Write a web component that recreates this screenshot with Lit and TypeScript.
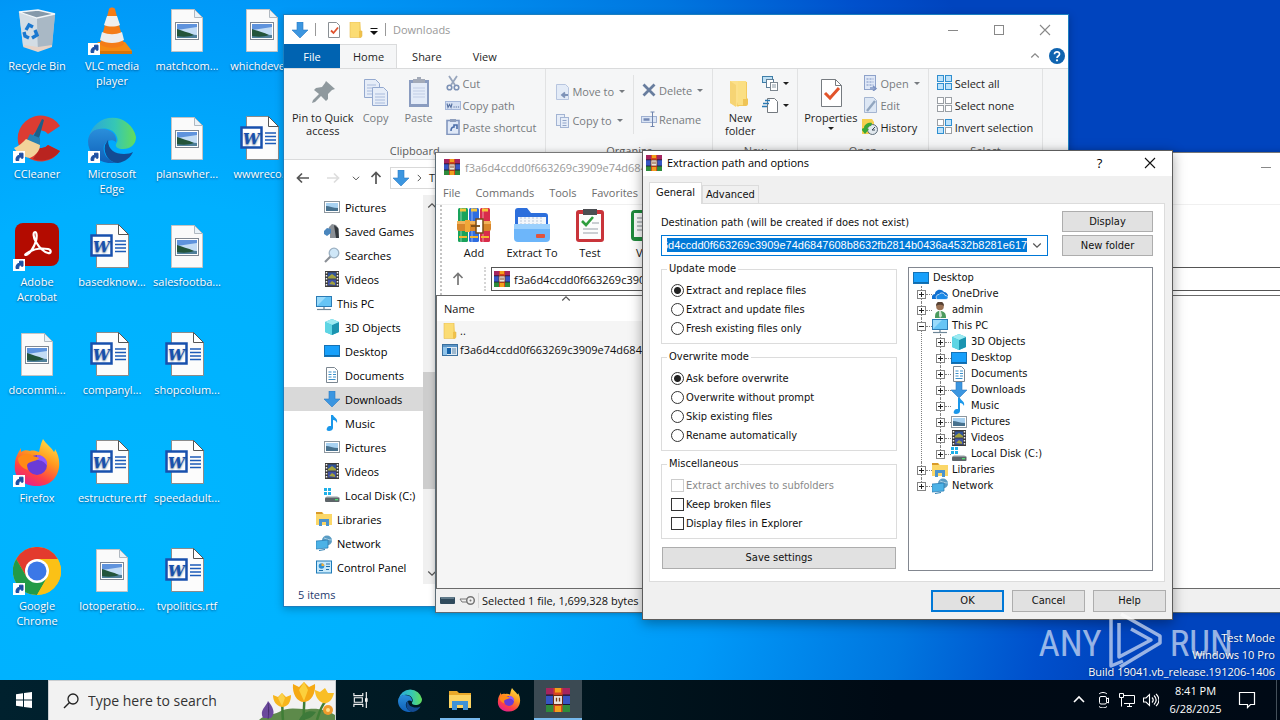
import { LitElement, html, css, svg, nothing, TemplateResult } from "lit";
import { customElement, query } from "lit/decorators.js";
import { classMap } from "lit/directives/class-map.js";

const pic = (w: number, h: number, body: unknown) =>
  html`<svg class="pic" viewBox="0 0 ${w} ${h}" aria-hidden="true">${body}</svg>`;

/* ---------- desktop icons, 48 x 48 ---------- */
const shortcut = svg`<rect x="0" y="36" width="12" height="12" fill="#fff"/><path d="M3 45.500C2.800 42 4 40.500 6.500 40.300V38.200H10v5H8.300v-1.400C6 42.300 5.600 43.500 5.800 45.500z" fill="#1d4fa3" stroke="#1d4fa3"/>`;

const recycle = pic(48, 48, svg`
  <path d="M6 5l4 33 15 6 14-5 3-32-18-4z" fill="#b9c6d1" opacity=".95"/>
  <path d="M6 5l18 6 1 33-15-5z" fill="#d3dde5"/>
  <path d="M24 11l18-4-3 32-14 5z" fill="#a9b8c5"/>
  <path d="M6 5l19-2 17 4-18 4z" fill="#8599aa" stroke="#f2f6f9" stroke-width="1.300"/>
  <path d="M11 38l14 2 14-2v2l-14 5-15-5z" fill="#e6d3c8"/>
  <g fill="none" stroke="#1a78d0" stroke-width="3.400"><path d="M13 23l3-5 4 2"/><path d="M22 23l2 5-5 3"/><path d="M16 31l-4-2-1-4"/></g>`);
const vlc = pic(48, 48, svg`
  <path d="M10 35h27l7 9a2 2 0 0 1-2 2H5a2 2 0 0 1-2-2z" fill="#f58a12"/>
  <path d="M4 44h40v3H4z" fill="#d87406"/>
  <path d="M21 2c1-2 5-2 6 0l9 35c-5 5-19 5-24 0z" fill="#f47c17"/>
  <path d="M19 9h10l3 9c-5 2-11 2-16 0z" fill="#efefef"/>
  <path d="M14 25c7 3 13 3 20 0l2 8c-7 4-17 4-24 0z" fill="#ececec"/>${shortcut}`);
const ccleaner = pic(48, 48, svg`
  <path d="M47 11A23 23 0 1 0 47 36L35 30A9 9 0 1 1 35 19z" fill="#dc3c32"/>
  <path d="M47 36A23 23 0 0 1 20 44L27 33A9 9 0 0 0 35 30z" fill="#b92420"/>
  <path d="M29 4l2 1-6 22-6-3z" fill="#1c5f88"/><path d="M17 19l10 4 0 7-14-3z" fill="#2681b4"/>
  <path d="M1 33c5-2 9-6 12-9l14 6c0 6-5 11-10 13-7-1-13-5-16-10z" fill="#f2d39a"/>${shortcut}`);
const edgeBody = svg`
  <defs>
    <linearGradient id="eg1" x1="0" y1="0" x2="1" y2="0"><stop offset="0" stop-color="#2aa5dc"/><stop offset=".55" stop-color="#35c7b5"/><stop offset="1" stop-color="#63dd5a"/></linearGradient>
    <linearGradient id="eg2" x1="0" y1="0" x2="0" y2="1"><stop offset="0" stop-color="#2a8fdb"/><stop offset="1" stop-color="#0f5fb8"/></linearGradient>
  </defs>
  <path d="M1 22A24 24 0 0 1 48 22c0 8-6 12-13 12-5 0-8-2-7-5 2-3 2-5 0-9-5-9-20-9-27 2z" fill="url(#eg1)"/>
  <path d="M0 26C1 14 12 12 20 15c6 2 9 7 8 12-6-5-14 1-12 9 1 6 6 10 12 12C12 50 0 40 0 26z" fill="url(#eg2)"/>
  <path d="M17 30c-2 10 5 18 13 18 7-1 13-6 15-11-2 1-5 2-9 2-9 0-16-4-16-14z" fill="#134b93"/>`;
const edge = pic(48, 48, svg`${edgeBody}${shortcut}`);
const edgePlain = pic(48, 48, edgeBody);
const acrobat = pic(48, 48, svg`
  <rect x="2" y="0" width="44" height="43" rx="8" fill="#b30b00"/>
  <path d="M13 32c4-1 8-8 10-14 1-4 1-9-1-9s-2 5 1 10 8 10 12 11c3 1 4-3 0-4-6-1-14 0-19 3-3 2-5 3-3 3z" fill="none" stroke="#fff" stroke-width="2.200"/>${shortcut}`);
const firefoxBody = svg`
  <defs><linearGradient id="ff" x1=".8" y1="0" x2=".3" y2="1"><stop offset="0" stop-color="#ffe14a"/><stop offset=".4" stop-color="#ff9a1f"/><stop offset=".75" stop-color="#ff3f46"/><stop offset="1" stop-color="#e3208f"/></linearGradient></defs>
  <path d="M30 0c3 5 8 8 11 13 1-1 1-2 1-3 9 14 4 37-18 37C10 47 0 38 2 25c0-6 3-11 6-16v4c3-2 6-2 9-1 3-1 6 0 9 1 1-5 2-9 4-13z" fill="url(#ff)"/>
  <circle cx="24" cy="26" r="10" fill="#6a3bd6"/><path d="M24 16c6 0 11 4 10 11-2-4-6-6-10-6z" fill="#9059ff"/>
  <path d="M5 19c5-5 12-5 15-2 2 1 5 1 6 2-1 2-5 3-8 4-4 1-5 3-3 8-6-2-10-6-10-12z" fill="#ff8a16"/>`;
const firefox = pic(48, 48, svg`${firefoxBody}${shortcut}`);
const firefoxPlain = pic(48, 48, firefoxBody);
const chrome = pic(48, 48, svg`
  <circle cx="24" cy="24" r="24" fill="#fbc116"/>
  <path d="M24 12h20.800A24 24 0 0 0 3.200 12l10.400 18z" fill="#e33b2e"/>
  <path d="M3.200 12A24 24 0 0 0 24 48l10.400-18-20.800 0z" fill="#229a48"/>
  <path d="M44.800 12A24 24 0 0 1 24 48l10.400-18A12 12 0 0 0 24 12z" fill="#fbc116"/>
  <circle cx="24" cy="24" r="12" fill="#fff"/><circle cx="24" cy="24" r="9.500" fill="#3b78e7"/>${shortcut}`);
const sheet = svg`<path d="M8.500 2.500h23l8 8v34h-31z" fill="#fafafa" stroke="#c4c4c4"/><path d="M31.500 2.500v8h8z" fill="#eaf2f8" stroke="#b0b8c0"/>`;
const picture = pic(48, 48, svg`${sheet}
  <rect x="12.500" y="15.500" width="23" height="17" fill="#fff" stroke="#7f8792"/>
  <rect x="14" y="17" width="20" height="14" fill="#c3dcf5"/><path d="M14 17h20v3l-20 3z" fill="#5f93dd"/>
  <path d="M14 24c6 1 12 4 20 4v3H14z" fill="#4f7f9a"/><path d="M14 22c5 2 11 3 17 6-5 2-12 2-17 1z" fill="#23543a"/>`);
const word = pic(48, 48, svg`
  <path d="M8.500 1.500h22l10 10v33h-32z" fill="#fcfcfc" stroke="#8b8b8b"/><path d="M30.500 1.500v10h10z" fill="#fff" stroke="#555"/>
  <path d="M27 18h11M27 21.500h11M27 25h11M27 28.500h11" stroke="#1d5bb8" stroke-width="1.300"/>
  <rect x="3.500" y="12.500" width="20" height="20" fill="#fff" stroke="#1850ad" stroke-width="2.500"/>
  <text x="13.500" y="28.500" text-anchor="middle" font-family="DejaVu Serif, serif" font-weight="700" font-style="italic" font-size="15" fill="#1850ad">W</text>`);

/* ---------- small icons, 16 x 16 ---------- */
const rarBody = svg`
  <rect x="0" y="0" width="16" height="5" fill="#a5255f"/><rect x="0" y="5" width="16" height="6" fill="#3655c4"/><rect x="0" y="11" width="16" height="5" fill="#2e8b3c"/>
  <path d="M0 4.800h16M0 11h16" stroke="#1b1630" stroke-width=".8"/><rect x="5" y="0" width="6" height="16" fill="#d8451f"/>
  <path d="M6 0h4v3H6zM6 12h4v4H6z" fill="#f2a01c"/><rect x="5" y="5" width="6" height="6" fill="#ece5dc" stroke="#6c2a12" stroke-width=".7"/>
  <path d="M7 9V6.500M9 9V6.500" stroke="#7b3b16" stroke-width=".9"/>`;
const rar = pic(16, 16, rarBody);
const down = pic(16, 16, svg`<path d="M5 0h6v8h5l-8 8-8-8h5z" fill="#3c96e0"/><path d="M5 0h6v8h5l-8 8-8-8h5z" fill="none" stroke="#2878c4" stroke-width=".6"/>`);
const folder = pic(16, 16, svg`<path d="M2 0h10l1 9h1v5l-1 1.500H2z" fill="#fbdc74"/><path d="M11 9h3v5l-1 1.500h-2z" fill="#f0c14a"/><path d="M2 0h10v9h2v5l-1 1.500H2z" fill="none" stroke="#e6bc50" stroke-width=".6"/>`);
const docCheck = pic(16, 16, svg`<path d="M2.500.5h8l3 3v12h-11z" fill="#fff" stroke="#8a8f94"/><path d="M5 8.500l2.500 2.500L12 5.500" fill="none" stroke="#e0522d" stroke-width="1.800"/>`);
const caretBar = pic(8, 16, svg`<path d="M.5 6.500h7" stroke="#111"/><path d="M0 9h8l-4 4z" fill="#111"/>`);
const photos = pic(16, 16, svg`<rect x=".5" y="2.500" width="15" height="11" fill="#fff" stroke="#8d979f"/><rect x="2" y="4" width="12" height="8" fill="#a8d2f2"/><path d="M2 7c3 0 7 2 12 2v3H2z" fill="#47718e"/>`);
const games = pic(16, 16, svg`<path d="M6 15V9l-2-1 1-4 3-3 4 1 3 4v9z" fill="#8b9096"/><path d="M10 2l4 3 1 10h-3z" fill="#33383d"/><path d="M0 8l3-3 4 1v4l-4 3-3-2z" fill="#4a86bd"/>`);
const search16 = pic(16, 16, svg`<path d="M1 15l6-6" stroke="#8a8f96" stroke-width="2.200"/><circle cx="10" cy="6" r="4.800" fill="#cfe7f8" stroke="#9bb0c2" stroke-width="1.300"/>`);
const film = pic(16, 16, svg`<rect x="1" y="0" width="14" height="16" fill="#3b3b3b"/><path d="M2.500 1v15M13.500 1v15" stroke="#f3f3f3" stroke-width="1.500" stroke-dasharray="1.500 1.500"/><rect x="4" y="1.500" width="8" height="6" fill="#30539a"/><rect x="4" y="8.500" width="8" height="6" fill="#3f51a6"/><path d="M4 6l4-3 4 3v1.500H4zM5 13l3-3 3 2v2z" fill="#a3a23c"/>`);
const pc = pic(16, 16, svg`<rect x=".5" y="1.500" width="15" height="10" fill="#66c4f5" stroke="#2b7bb5"/><path d="M1 11V2h9z" fill="#9adbfb"/><path d="M7 12h2v2H7z" fill="#9fb0bb"/><path d="M1 14.500h14" stroke="#6d8697" stroke-width="1.200"/>`);
const cube = pic(16, 16, svg`<path d="M1 3l7-3 7 3v10l-7 3-7-3z" fill="#35c0d6"/><path d="M8 6l7-3v10l-7 3z" fill="#1b94b0"/><path d="M1 3l7-3 7 3-7 3z" fill="#9ceaf2"/><path d="M1 3l7 3v10l-7-3z" fill="#5ed5e4"/>`);
const desktop16 = pic(16, 16, svg`<rect x=".5" y="2.500" width="15" height="11" fill="#18a0fb" stroke="#1672b5"/><path d="M1 12.500h14" stroke="#0d6cae"/>`);
const doc16 = pic(16, 16, svg`<path d="M2.500.5h8l3 3v12h-11z" fill="#fff" stroke="#7c8791"/><path d="M4.500 5h3M4.500 7.500h3M4.500 10h3M4.500 12.500h7M9 5h3M9 7.500h3M9 10h3" stroke="#3a8fc9" stroke-width="1.200"/>`);
const music = pic(16, 16, svg`<path d="M7 0h2c1 3 5 3 4 8-1-2-2-3-4-3v8c0 2-2 3-4 3s-3-1-2-3 2-2 4-2z" fill="#1a97ea"/>`);
const disk = pic(16, 16, svg`<path d="M0 1h3v3H0zM4 1h3v3H4zM0 5h3v3H0zM4 5h3v3H4z" fill="#1fb0e8"/><path d="M3 9h10l3 2H1z" fill="#c9cdd1"/><rect x="1" y="10.500" width="14.500" height="4.500" rx="1" fill="#5d6469"/><rect x="11" y="12" width="3" height="1.300" fill="#4fe070"/>`);
const library = pic(16, 16, svg`<path d="M0 1h6l2 2h8v11H0z" fill="#fbd768"/><path d="M0 1h6l1 2H0z" fill="#d99a28"/><path d="M3 8h10v7h-3v-4H6v4H3z" fill="#4b93cd"/>`);
const network = pic(16, 16, svg`<circle cx="11" cy="5.500" r="5" fill="#5a9cc4"/><path d="M8 3c3 1 5 2 8 2" stroke="#a9d0e4" fill="none"/><path d="M0 6l12-1v8l-12 1z" fill="#4cb2e6" stroke="#2579b0" stroke-width=".7"/><path d="M3 15.500l6-1" stroke="#2d7db0"/>`);
const control = pic(16, 16, svg`<rect x=".5" y="2" width="15" height="12" fill="#c7e9fb" stroke="#1d7ab8"/><circle cx="5.500" cy="7" r="2.800" fill="#2d8fd2"/><path d="M5.500 7V4.200A2.800 2.800 0 0 1 8.300 7z" fill="#f3b13c"/><path d="M10 5h4M10 7.500h4M3 11.500h4M10 10.500h3" stroke="#226fa8"/>`);
const cloud = pic(16, 16, svg`<path d="M0 13c-1-3 1-5 3-5 0-4 6-6 9-2 2 0 4 2 4 4s-1 3-3 3z" fill="#0f6fd0"/><path d="M5 13.500c-2-3 0-5 2-5 2-3 6-1 6 1 4 0 4 4 0 4z" fill="#1b8ae8" stroke="#fff" stroke-width=".7"/>`);
const person = pic(16, 16, svg`<path d="M3 16c0-5 1-7 5-7s6 2 6 7z" fill="#4b9b5e"/><path d="M7 9h2l1 5-2 2-1-2z" fill="#cfe2d2"/><circle cx="8" cy="4.500" r="3.800" fill="#9a7255"/><path d="M4 4c0-6 8-6 8 0-2-1-5-2-8 0z" fill="#574234"/>`);
const exe = pic(16, 16, svg`<rect x=".5" y="2.500" width="15" height="11" fill="#dfeaf3" stroke="#3a6f9e"/><rect x="1" y="3" width="14" height="2" fill="#5b95c6"/><rect x="1" y="5" width="4" height="8" fill="#8fc3ea"/><rect x="5" y="6" width="4" height="6" fill="#1461a8"/><path d="M10 7h4M10 9h4M10 11h4" stroke="#5a86aa"/>`);
const chevron = (dir: "up" | "down" | "right", c = "#555") =>
  pic(16, 16, svg`<path d=${{ up: "M3 10l5-5 5 5", down: "M3 6l5 5 5-5", right: "M6 3l5 5-5 5" }[dir]} fill="none" stroke=${c} stroke-width="1.600"/>`);
const arrow = (dir: "left" | "right" | "up", c: string) =>
  pic(16, 16, svg`<path d=${{ left: "M14 8H3M7 3.500L2.500 8 7 12.500", right: "M2 8h11M9 3.500l4.500 4.500L9 12.500", up: "M8 14V3M3.500 7L8 2.500 12.500 7" }[dir]} fill="none" stroke=${c} stroke-width="1.700"/>`);
const minimize = pic(16, 16, svg`<path d="M3 8.500h10" stroke="#888"/>`);
const maximize = pic(16, 16, svg`<rect x="3.500" y="3.500" width="9" height="9" fill="none" stroke="#888"/>`);
const close = (c: string) => pic(16, 16, svg`<path d="M3 3l10 10M13 3L3 13" stroke=${c} stroke-width="1.100"/>`);

/* ---------- ribbon icons ---------- */
const pin = pic(32, 32, svg`<path d="M19 5l9 8-3 1-4 4v5l-2 2-5-5-6 6-3 1 1-3 6-6-5-4 2-2 6-1 3-4z" fill="#8f999e"/>`);
const copy = pic(32, 32, svg`<g fill="#e6edf8" stroke="#94a9cf"><path d="M4.500 3.500h11l4 4v14h-15z"/><path d="M12.500 11.500h11l4 4v14h-15z"/></g><path d="M7 9h9M7 12h5M7 15h5M7 18h5M15 18h10M15 21h10M15 24h10M15 27h10" stroke="#a9bbdc"/>`);
const paste = pic(32, 32, svg`<rect x="6" y="4" width="20" height="27" fill="#8a9cc0"/><rect x="8" y="7" width="16" height="21" fill="#e3ebf8"/><path d="M14 1h4v2h4v4H10V3h4z" fill="#a3aab8"/><path d="M10 12h12M10 15h12M10 18h12M10 21h12" stroke="#c1cde5"/>`);
const cut = pic(16, 16, svg`<path d="M4 1l6 9M12 1L6 10" stroke="#98a6bd" stroke-width="1.800"/><circle cx="4.500" cy="12.500" r="2.300" fill="none" stroke="#7c91b5" stroke-width="1.600"/><circle cx="11.500" cy="12.500" r="2.300" fill="none" stroke="#7c91b5" stroke-width="1.600"/>`);
const copyPath = pic(16, 16, svg`<rect x=".5" y="4.500" width="15" height="8" fill="#d5e0f3" stroke="#a5b7da"/><path d="M2 6.500l1 4 1.500-3 1.500 3 1-4M8.500 10h1.200M10.700 10h1.200M12.900 10h1.200" fill="none" stroke="#56709f" stroke-width="1.100"/>`);
const pasteLink = pic(16, 16, svg`<rect x="2" y="1.500" width="12" height="14" fill="#dfe8f7" stroke="#8296be" stroke-width="1.600"/><path d="M5 0h6v3H5z" fill="#8f9fbd"/><path d="M6 12c0-3 1-4 3-4V6h3v4" fill="none" stroke="#496ca8" stroke-width="1.600"/>`);
const moveTo = pic(16, 16, svg`<path d="M2.500.5h9l3 3v12h-12z" fill="#e3ebf7" stroke="#b7c5df"/><path d="M14 11H9M11 8.500L8 11l3 2.500" fill="none" stroke="#7e93b8" stroke-width="1.800"/>`);
const copyTo = pic(16, 16, svg`<g fill="#e6edf8" stroke="#a3b4d3"><rect x="2.500" y="1.500" width="8" height="11"/><rect x="6.500" y="4.500" width="8" height="10"/></g><path d="M8.500 7.500h4M8.500 10h4M8.500 12.500h4" stroke="#92a5c8"/>`);
const cross = pic(16, 16, svg`<path d="M2.500 2.500l11 11M13.500 2.500l-11 11" stroke="#687d9e" stroke-width="2.800"/>`);
const rename = pic(16, 16, svg`<rect x=".5" y="5.500" width="15" height="6" fill="#dbe5f5" stroke="#9fb0d0"/><path d="M2.500 8.500h6" stroke="#7489b4" stroke-width="2.500"/><path d="M11.500 1v15M9.500 1h4M9.500 15.500h4" stroke="#6f84ae"/>`);
const newFolder = pic(32, 32, svg`<path d="M6 5h13v22l-5 4-8-4z" fill="#fce08a"/><path d="M19 5l4 1v16l1 1v6l-2 1-9 0z" fill="#f3ca5e"/><path d="M6 5l6 4v22l-6-4z" fill="#f6d474"/><path d="M14 5h8v18h2v6H14z" fill="#fbdf83"/><path d="M19 23h5v5l-2 2h-3z" fill="#efc456"/>`);
const newItem = pic(16, 16, svg`<rect x=".5" y="1.500" width="10" height="6" fill="#bfe0f4" stroke="#3f7ea8"/><rect x="4.500" y="4.500" width="7" height="8" fill="#fff" stroke="#5f7f98"/><rect x="8.500" y="7.500" width="7" height="8" fill="#fff" stroke="#7d8790"/><path d="M10 10h4M10 12h4" stroke="#8897a3"/>`);
const easyAccess = pic(16, 16, svg`<path d="M5.500 1.500h7l3 3v11h-10z" fill="#fff" stroke="#73797f"/><path d="M3 3.500h5M1 6.500h6M0 9.500h5" stroke="#2b7ab3" stroke-width="1.400"/>`);
const properties = pic(32, 32, svg`<path d="M6.500 3.500h14l6 6v21h-20z" fill="#fff" stroke="#767b80"/><path d="M20.500 3.500v6h6" fill="none" stroke="#767b80"/><path d="M10 17l5 5 9-10" fill="none" stroke="#e2542b" stroke-width="3"/>`);
const openFile = pic(16, 16, svg`<rect x="2.500" y=".5" width="11" height="14" fill="#dfe8f7" stroke="#8ea2ca"/><path d="M4.500 4h7M4.500 7h7M4.500 10h7" stroke="#7d93c2" stroke-dasharray="2 1"/><path d="M8 13h5M11 11l3 2.500-3 2.500" stroke="#7d93c2" fill="none" stroke-width="1.500"/>`);
const edit = pic(16, 16, svg`<path d="M2.500.5h9l3 3v12h-12z" fill="#dde7f4" stroke="#a4b5d1"/><path d="M5 14l8-10" stroke="#92a6bf" stroke-width="2.400"/>`);
const history = pic(16, 16, svg`<path d="M0 0h10l2 3v12H0z" fill="#f5cf4f"/><circle cx="10.500" cy="10.500" r="5" fill="#e1e8ee" stroke="#5c6b78"/><path d="M2 9c0-4 5-6 8-5L9 7c-2 0-4 2-4 3h2l-4 5-4-5z" fill="#38a838"/><path d="M10 11l3-3M10 11h3" stroke="#3c4a55"/>`);
const squares = (a: string, b: string, c: string, d: string) => {
  const one = (x: number, y: number, f: string) =>
    svg`<rect x=${x} y=${y} width="6" height="6" fill=${f} stroke=${f === "#fff" ? "#9a9fa4" : "#2f8fd0"}/>`;
  return pic(16, 16, svg`${one(0.5, 0.5, a)}${one(8.5, 0.5, b)}${one(0.5, 8.5, c)}${one(8.5, 8.5, d)}`);
};
const help = pic(16, 16, svg`<circle cx="8" cy="8" r="8" fill="#0f64b0"/><path d="M5.500 6.300c0-3.500 5.200-3.200 5 0C10.400 8 8 8 8 10" fill="none" stroke="#fff" stroke-width="1.700"/><circle cx="8" cy="12.300" r="1.100" fill="#fff"/>`);

/* ---------- archiver toolbar, 36 x 36 ---------- */
const books = pic(36, 36, svg`
  <rect x="2" y="1" width="10" height="34" rx="1.500" fill="#19a35b"/><rect x="13" y="1" width="10" height="34" rx="1.500" fill="#2f6de0"/><rect x="24" y="1" width="10" height="34" rx="1.500" fill="#d92c4a"/>
  <path d="M5 1v34M16 1v34M27 1v34" stroke="#fff" stroke-opacity=".25" stroke-width="2"/>
  <path d="M4 3h6M15 3h6M26 3h6" stroke="#f6c63a" stroke-width="3"/><path d="M3 30h8M14 30h8M25 30h8" stroke="#f3b52e" stroke-width="2"/>
  <rect x="1" y="14" width="34" height="10" rx="2" fill="#d8862b"/><rect x="1" y="14" width="34" height="3" fill="#f2b25a"/>
  <path d="M20 12h7v14h-7z" fill="#fff" stroke="#7a4b16" stroke-width="1.500"/><path d="M9 13h5v12H9z" fill="#f0a838"/><path d="M15 19h9" stroke="#7a4b16" stroke-width="1.800"/>`);
const extract = pic(36, 36, svg`
  <path d="M1 4a3 3 0 0 1 3-3h9l4 5h14a3 3 0 0 1 3 3v22H1z" fill="#2d6fdc"/><rect x="4" y="10" width="28" height="14" fill="#f4f7fb"/>
  <path d="M7 10v8M11 10v8M15 10v8M19 10v8M23 10v8M27 10v8" stroke="#b9c7da" stroke-dasharray="2 1"/>
  <path d="M0 17h36v14a4 4 0 0 1-4 4H4a4 4 0 0 1-4-4z" fill="#6db6fa"/><path d="M0 17h36v5H0z" fill="#9bd0fd"/><rect x="22" y="27" width="9" height="4" rx="1" fill="#e2543c"/>`);
const test = pic(36, 36, svg`
  <rect x="4" y="3" width="28" height="32" rx="3" fill="#c9343a"/><rect x="7" y="7" width="22" height="25" fill="#fcfcfc"/>
  <path d="M11 2h14v6H11z" fill="#4b4e52"/><path d="M10 14l4 4 7-8" fill="none" stroke="#2f9e3e" stroke-width="2.600"/>
  <path d="M20 16h7M11 22h15M11 26h15" stroke="#b9bec4" stroke-width="1.500"/>`);
const view = pic(36, 36, svg`<rect x="1" y="3" width="34" height="31" rx="4" fill="#1f8a3c"/><path d="M4 6h13l2 2 2-2h12v24H4z" fill="#fbfbfb"/><path d="M7 11h9M7 15h9M7 19h9M7 23h9" stroke="#a9b0b5" stroke-width="1.500"/>`);

/* ---------- taskbar ---------- */
const windows = pic(16, 16, svg`<path d="M0 2.300L7 1.300V7.600H0zM8 1.100L16 0v7.600H8zM0 8.500h7v6.300l-7-1zM8 8.500h8V16l-8-1.100z" fill="#fff"/>`);
const lens = pic(16, 16, svg`<circle cx="10" cy="6" r="5" fill="none" stroke="#222" stroke-width="1.300"/><path d="M6.500 9.500L1 15" stroke="#222" stroke-width="1.400"/>`);
const flowers = pic(76, 39, svg`
  <path d="M0 39c6-6 14-5 20-8 10-6 20-2 30-3 10-1 20 2 26 6v5z" fill="#5d8a4a"/>
  <path d="M4 37c-4-8 3-11 5-17 5 6 8 12 3 17z" fill="#6b4a9c"/><path d="M9 22c1 6 1 10 0 16" stroke="#523680"/>
  <path d="M24 39c-1-8 0-10-1-16M45 39c-1-10 1-16 0-24M58 39c2-6 3-12 8-18" stroke="#3f7d36" stroke-width="2.500" fill="none"/>
  <path d="M14 14l5 2 4-4 4 4 5-2c0 7-3 12-9 12-6-1-9-6-9-12z" fill="#f7b51c"/><path d="M23 12l3 5-3 8-4-8z" fill="#fbd24a"/>
  <path d="M34 3l6 3 5-5 5 5 6-3c1 9-4 18-11 18-7 0-12-8-11-18z" fill="#f5a914"/><path d="M45 1l4 8-4 11-5-11z" fill="#fcd03c"/>
  <path d="M56 9l5 2 5-4 3 5 6 0c-2 8-6 11-11 10-5-2-8-7-8-13z" fill="#f9be25"/>
  <circle cx="69" cy="29" r="5" fill="#ef9a2c"/><circle cx="69" cy="29" r="2" fill="#ffe08a"/><path d="M40 39c4-9 11-10 17-8-4 6-9 8-17 8z" fill="#3d7a3a"/>`);
const taskView = pic(18, 18, svg`<path d="M1 1v3h10V1M1 17v-3h10v3M1.500 6.500h9v5h-9zM15 0v18" fill="none" stroke="#f2f2f2" stroke-width="1.300"/><path d="M13.500 7h3v4h-3z" fill="#f2f2f2"/>`);
const files = pic(24, 24, svg`<path d="M1 3h8l2 2h12v15H1z" fill="#e9a92a"/><path d="M1 7h22v13H1z" fill="#fcd462"/><path d="M4 13h16v9h-5v-5H9v5H4z" fill="#3f93d6"/>`);
const camera = pic(16, 16, svg`<rect x="4.500" y="4.500" width="7" height="7.500" rx="1.500" fill="none" stroke="#fff"/><path d="M11.500 7l2-1v5l-2-1M4 2c2-2 6-2 8 0M4 14.500c2 2 6 2 8 0" fill="none" stroke="#fff"/>`);
const netTray = pic(16, 16, svg`<path d="M4 3.500h11.500v8H5M8 14.500h5M10.500 11.500v3M.5 1.500h4v4h-4zM2.500 5.500v9" fill="none" stroke="#fff"/>`);
const speaker = pic(16, 16, svg`<path d="M.5 6h2.500l3.500-3.500v11L3 10H.5zM9 5.500c1.500 1.500 1.500 3.500 0 5M11 3.500c2.800 2.800 2.800 6.200 0 9M13 1.800c4 4 4 8.400 0 12.400" fill="none" stroke="#fff" stroke-width="1.100"/>`);
const note = pic(18, 18, svg`<path d="M1.500 1.500h15v12h-4l-3 3v-3h-8z" fill="none" stroke="#fff" stroke-width="1.200"/>`);
const playMark = pic(56, 64, svg`
  <g fill="none" stroke="#fff" stroke-opacity=".6" stroke-width="3.500" stroke-linejoin="round"><path d="M3 8v47l12-5"/><path d="M11 12v34l32-17-20-11"/><path d="M13 3l39 22v7L12 56"/></g>`);

const base = css`
  :host { display: block; box-sizing: border-box; }
  *, *::before, *::after { box-sizing: border-box; }
  .pic { display: block; width: 16px; height: 16px; flex: none; }
  .big .pic { width: 32px; height: 32px; }
  button { font: inherit; color: inherit; background: none; border: 0; padding: 0; margin: 0; white-space: nowrap; }
  a { color: inherit; text-decoration: none; }
  ul { list-style: none; margin: 0; padding: 0; }
`;

@customElement("desk-icons")
class DeskIcons extends LitElement {
  static styles = [base, css`
    ul { display: grid; grid-auto-flow: column; grid-template-rows: repeat(6, 108px); grid-auto-columns: 75px; width: max-content; padding-top: 7px; }
    a { display: flex; flex-direction: column; align-items: center; gap: 3px; width: 74px; color: #fff; text-align: center; font-size: 11px; line-height: 15px; text-shadow: 0 1px 2px rgba(0, 40, 90, .7); }
    .pic { width: 48px; height: 48px; }
    span { white-space: pre-line; }
  `];
  items: [TemplateResult, string][] = [
    [recycle, "Recycle Bin"], [ccleaner, "CCleaner"], [acrobat, "Adobe\nAcrobat"], [picture, "docommi..."], [firefox, "Firefox"], [chrome, "Google\nChrome"],
    [vlc, "VLC media\nplayer"], [edge, "Microsoft\nEdge"], [word, "basedknow..."], [word, "companyl..."], [word, "estructure.rtf"], [picture, "lotoperatio..."],
    [picture, "matchcom..."], [picture, "planswher..."], [picture, "salesfootba..."], [word, "shopcolum..."], [word, "speedadult..."], [word, "tvpolitics.rtf"],
    [picture, "whichdeve..."], [word, "wwwreco..."],
  ];
  render() {
    return html`<ul>${this.items.map(([i, t]) => html`<li><a href="#">${i}<span>${t}</span></a></li>`)}</ul>`;
  }
}

@customElement("explorer-window")
class ExplorerWindow extends LitElement {
  static styles = [base, css`
    :host { display: flex; flex-direction: column; background: #fff; border: 1px solid #1c7fc0; font-size: 11px; color: #1e1e1e; }
    .title { display: flex; align-items: center; height: 29px; padding: 0 0 0 8px; color: #999; }
    .title > .rule { width: 1px; height: 13px; background: #999; margin: 0 7px; }
    .title .quick { display: flex; align-items: center; gap: 6px; padding-left: 3px; }
    .quick .pic:last-child { width: 8px; }
    .tri { width: 0; height: 0; border: 3px solid transparent; border-top-color: currentColor; border-bottom: 0; }
    .controls { display: flex; margin-left: auto; }
    .controls button { width: 46px; display: grid; place-items: center; }
    .tabs { display: flex; align-items: stretch; height: 24px; }
    .tabs button { padding: 0 15px; min-width: 56px; }
    .tabs .file { background: #0063b1; color: #fff; }
    .tabs .on { background: #f5f6f7; border: 1px solid #dadbdc; border-bottom: 0; border-left: 0; padding: 0 12px 0 13px; }
    .tabs .end { display: flex; align-items: center; gap: 8px; margin-left: auto; padding-right: 3px; }
    .end .pic { width: 12px; height: 12px; }
    .end .pic + .pic { width: 16px; height: 16px; }
    .ribbon { display: flex; height: 92px; background: #f5f6f7; border: solid #dadbdc; border-width: 1px 0; }
    .group { display: grid; grid-template-rows: 73px 16px; border-right: 1px solid #e1e2e3; justify-items: center; }
    .group .name { color: #5a5a5a; line-height: 18px; }
    .group > div { display: flex; gap: 1px; justify-self: stretch; padding: 3px 9px 0 8px; }
    .group.slim > div { padding: 3px 8px 0 6px; }
    .big { display: flex; flex-direction: column; align-items: center; gap: 3px; line-height: 13px; min-width: 42px; padding-top: 4px; white-space: pre-line; text-align: center; }
    .list { display: grid; align-content: start; }
    .list button { display: flex; align-items: center; gap: 2px; height: 22px; }
    .list.two { align-content: center; gap: 7px; padding-bottom: 2px; }
    .list.two + .list.two { border-left: 1px solid #e1e2e3; margin: 3px 0 8px 7px; padding: 0 0 0 7px; }
    .off { color: #777b80; }
    .list.gap { margin-left: 4px; }
    .tri.l { margin-left: 3px; }
    .nav { display: flex; align-items: center; height: 35px; padding-left: 11px; gap: 14px; }
    .nav > .small { margin: 0 -7px 0 -4px; }
    .small .pic { width: 10px; height: 10px; }
    .path { flex: 1; display: flex; align-items: center; gap: 5px; height: 22px; border: 1px solid #d9d9d9; padding-left: 2px; margin-left: -8px; }
    .body { display: grid; grid-template-columns: 139px 17px 1fr; height: 389px; overflow: hidden; }
    .side a { display: flex; align-items: center; gap: 5px; height: 24px; padding-left: 32px; white-space: nowrap; color: #000; }
    .side .deep { padding-left: 40px; }
    .side .on { background: #d9d9d9; }
    .scroll { background: #f0f0f0; display: flex; flex-direction: column; align-items: center; justify-content: space-between; padding: 5px 0; }
    .scroll .pic { width: 12px; height: 12px; }
    .thumb { align-self: stretch; height: 117px; background: #cdcdcd; margin-top: 82px; }
    .status { padding: 0 14px 1px; line-height: 21px; color: #1e3a6e; }
  `];
  places: [TemplateResult, string, boolean][] = [
    [photos, "Pictures", true], [games, "Saved Games", true], [search16, "Searches", true], [film, "Videos", true], [pc, "This PC", false],
    [cube, "3D Objects", true], [desktop16, "Desktop", true], [doc16, "Documents", true], [down, "Downloads", true], [music, "Music", true],
    [photos, "Pictures", true], [film, "Videos", true], [disk, "Local Disk (C:)", true], [library, "Libraries", false], [network, "Network", false], [control, "Control Panel", false],
  ];
  row(icon: TemplateResult, text: string, off = false, tri = false) {
    return html`<button class=${classMap({ off })}>${icon}${text}${tri ? html`<span class="tri l"></span>` : nothing}</button>`;
  }
  render() {
    const b = "#bfe3fb", w = "#fff";
    return html`
      <div class="title">${down}<span class="rule"></span>
        <div class="quick">${docCheck}${folder}${caretBar}</div>
        <span class="rule"></span><span>Downloads</span>
        <div class="controls"><button aria-label="Minimize">${minimize}</button><button aria-label="Maximize">${maximize}</button><button aria-label="Close">${close("#888")}</button></div>
      </div>
      <div class="tabs"><button class="file">File</button><button class="on">Home</button><button>Share</button><button>View</button>
        <div class="end">${chevron("up", "#888")}${help}</div></div>
      <div class="ribbon">
        <div class="group"><div>
          <button class="big">${pin}Pin to Quick${"\n"}access</button>
          <button class="big off">${copy}Copy</button><button class="big off">${paste}Paste</button>
          <div class="list gap">${this.row(cut, "Cut", true)}${this.row(copyPath, "Copy path", true)}${this.row(pasteLink, "Paste shortcut", true)}</div>
        </div><span class="name">Clipboard</span></div>
        <div class="group"><div>
          <div class="list two">${this.row(moveTo, "Move to", true, true)}${this.row(copyTo, "Copy to", true, true)}</div>
          <div class="list two">${this.row(cross, "Delete", true, true)}${this.row(rename, "Rename", true)}</div>
        </div><span class="name">Organize</span></div>
        <div class="group slim"><div>
          <button class="big">${newFolder}New${"\n"}folder</button>
          <div class="list">${this.row(newItem, "", false, true)}${this.row(easyAccess, "", false, true)}</div>
        </div><span class="name">New</span></div>
        <div class="group slim"><div>
          <button class="big">${properties}Properties<span class="tri"></span></button>
          <div class="list gap">${this.row(openFile, "Open", true, true)}${this.row(edit, "Edit", true)}${this.row(history, "History")}</div>
        </div><span class="name">Open</span></div>
        <div class="group"><div>
          <div class="list">${this.row(squares(b, b, b, b), "Select all")}${this.row(squares(w, w, w, w), "Select none")}${this.row(squares(w, b, b, w), "Invert selection")}</div>
        </div><span class="name">Select</span></div>
      </div>
      <div class="nav">${arrow("left", "#555")}${arrow("right", "#ddd")}<span class="small">${chevron("down")}</span>${arrow("up", "#555")}
        <div class="path">${down}<span class="small">${chevron("right")}</span><span>This PC</span></div></div>
      <div class="body">
        <nav class="side">${this.places.map(([i, t, deep]) => html`<a href="#" class=${classMap({ deep, on: t === "Downloads" })}>${i}${t}</a>`)}</nav>
        <div class="scroll">${chevron("up")}<span class="thumb"></span>${chevron("down")}</div>
      </div>
      <div class="status">5 items</div>`;
  }
}

@customElement("archive-window")
class ArchiveWindow extends LitElement {
  static styles = [base, css`
    :host { display: flex; flex-direction: column; background: #fff; border: 1px solid #5b6b75; border-top-color: #777; font-size: 11px; color: #111; }
    .title { display: flex; align-items: center; gap: 5px; height: 28px; padding-left: 8px; color: #999; }
    .controls { display: flex; margin-left: auto; }
    .controls button { width: 46px; display: grid; place-items: center; }
    .menu { display: flex; gap: 15px; padding-left: 7px; height: 24px; align-items: center; color: #6c6c6c; border-bottom: 1px solid #f0f0f0; }
    .bars { border-left: 2px dotted #c4c4c4; margin-left: 4px; padding-bottom: 4px; }
    .tools { display: flex; height: 62px; padding: 2px 0 0 3px; }
    .tools button { display: flex; flex-direction: column; align-items: center; gap: 2px; min-width: 58px; }
    .tools .pic { width: 36px; height: 36px; }
    .where { display: flex; align-items: center; height: 24px; }
    .where > button { padding: 0 8px; }
    .where > i { height: 24px; border-left: 2px dotted #d5d5d5; margin: 0 5px 0 10px; }
    .where .box { flex: 1; display: flex; align-items: center; gap: 4px; height: 24px; padding-left: 2px; border: 1px solid #555; white-space: nowrap; overflow: hidden; }
    .list { flex: 1; border: 1px solid #6a6a6a; border-width: 1px 0 1px 1px; background: linear-gradient(#fff 25px, #f5f5f5 25px) no-repeat 0 0 / 260px 100%; }
    table { border-collapse: collapse; }
    th { position: relative; font-weight: 400; text-align: left; height: 25px; padding: 0 7px; width: 260px; }
    th .pic { position: absolute; top: -3px; left: 123px; width: 12px; height: 12px; }
    td { padding: 0 5px; height: 19px; }
    td > div { display: flex; align-items: center; gap: 2px; white-space: nowrap; }
    .status { display: flex; align-items: center; gap: 3px; height: 23px; background: #f0f0f0; padding-left: 4px; }
    .status span { border-left: 1px solid #d8d8d8; padding-left: 3px; }
  `];
  name = "f3a6d4ccdd0f663269c3909e74d6847608b8632fb2814b0436a4532b8281e617";
  render() {
    return html`
      <div class="title">${rar}<span>${this.name}.zip</span>
        <div class="controls"><button aria-label="Minimize">${minimize}</button><button aria-label="Maximize">${maximize}</button><button aria-label="Close">${close("#777")}</button></div></div>
      <div class="menu"><span>File</span><span>Commands</span><span>Tools</span><span>Favorites</span></div>
      <div class="bars">
        <div class="tools"><button>${books}Add</button><button>${extract}Extract To</button><button>${test}Test</button><button>${view}View</button></div>
        <div class="where"><button aria-label="Up">${arrow("up", "#777")}</button><i></i><div class="box">${rar}<span>${this.name}.zip</span></div></div>
      </div>
      <div class="list"><table>
        <thead><tr><th>Name${chevron("up")}</th></tr></thead>
        <tbody><tr><td><div>${folder}<span>..</span></div></td></tr><tr><td><div>${exe}<span>${this.name}.exe</span></div></td></tr></tbody>
      </table></div>
      <div class="status">
        ${pic(16, 16, svg`<rect x="0" y="4" width="15" height="7" rx="1" fill="#2f4a5c"/><path d="M1 5h13" stroke="#8fa7b5"/>`)}
        ${pic(16, 16, svg`<circle cx="11.500" cy="7.500" r="3.800" fill="none" stroke="#777" stroke-width="1.500"/><circle cx="11.500" cy="7.500" r="1" fill="#777"/><path d="M8 6H1l2 3h5" fill="none" stroke="#777"/>`)}
        <span>Selected 1 file, 1,699,328 bytes</span></div>`;
  }
}

@customElement("extract-dialog")
class ExtractDialog extends LitElement {
  static styles = [base, css`
    :host { display: block; background: #f0f0f0; border: 1px solid #5c5c5c; font-family: Tahoma, "DejaVu Sans Condensed", "Open Sans", sans-serif; font-size: 11px; line-height: 14px; color: #111; }
    .title { display: flex; align-items: center; gap: 5px; height: 25px; padding: 0 0 2px 3px; background: #fff; font-family: "Segoe UI", "Open Sans", sans-serif; color: #000; }
    .title .q { margin-left: auto; font-size: 13px; }
    .title button { width: 45px; display: grid; place-items: center; }
    .tabs { display: flex; align-items: flex-end; height: 27px; padding-left: 6px; }
    .tabs button { height: 18px; padding: 0 3px; background: #f0f0f0; border: 1px solid #dcdcdc; border-bottom: 0; }
    .tabs .on { position: relative; height: 22px; padding: 0 6px 2px; background: #fff; margin-bottom: -1px; }
    .panel { margin: 0 7px 0 6px; border: 1px solid #dcdcdc; background: #fff; padding: 7px 11px 10px; }
    .top { display: grid; grid-template-columns: 1fr 91px; gap: 3px 14px; align-items: end; }
    .combo { display: flex; height: 21px; border: 1px solid #0078d7; padding: 2px 0 3px 5px; background: #fff; }
    .combo input { flex: 1; min-width: 0; font: inherit; font-family: "Liberation Sans", sans-serif; border: 0; padding: 0; outline: 0; background: #0078d7; color: #fff; text-align: right; }
    .combo input::selection { background: #0078d7; color: #fff; }
    .combo button { width: 20px; display: grid; place-items: center; }
    .combo .pic { width: 12px; height: 12px; }
    .btn { height: 21px; background: #e1e1e1; border: 1px solid #adadad; }
    .main { display: grid; grid-template-columns: 236px 1fr; gap: 11px; padding-top: 6px; }
    .opts { display: flex; flex-direction: column; gap: 6px; padding-bottom: 2px; }
    fieldset { margin: 0; padding: 5px 9px; border: 1px solid #dcdcdc; min-width: 0; }
    legend { padding: 0 2px; height: 14px; margin-left: -4px; }
    label { display: flex; align-items: center; gap: 2px; height: 19px; }
    label input { appearance: none; width: 13px; height: 13px; margin: 0; border: 1px solid #333; background: #fff; }
    label input[type="radio"] { border-radius: 50%; }
    label input[type="radio"]:checked { background: radial-gradient(circle, #222 3px, #fff 4px); }
    label.off { color: #8a8a8a; }
    label.off input { border-color: #ccc; }
    .opts .btn { margin: 2px 1px 0; height: 22px; }
    .tree { border: 1px solid #828790; margin-top: 5px; padding: 2px 4px; }
    .tree li { line-height: 16px; }
    .node { display: flex; align-items: center; gap: 4px; height: 16px; }
    .kids { padding-left: 3px; }
    .kids .kids { padding-left: 19px; }
    .kids > li { position: relative; }
    .kids > li::before { content: ""; position: absolute; left: 5px; top: 0; bottom: 0; border-left: 1px dotted #808080; }
    .kids > li:last-child::before { bottom: auto; height: 8px; }
    .kids > li > .node { gap: 0; }
    .kids > li > .node > .pic { margin-right: 4px; }
    .box { position: relative; width: 9px; height: 9px; border: 1px solid #848484; background: linear-gradient(#222, #222) center / 5px 1px no-repeat, #fff; margin-left: 1px; flex: none; }
    .box.plus { background: linear-gradient(#222, #222) center / 5px 1px no-repeat, linear-gradient(#222, #222) center / 1px 5px no-repeat, #fff; }
    .dash { width: 6px; border-top: 1px dotted #808080; flex: none; }
    .foot { display: flex; justify-content: flex-end; gap: 8px; padding: 8px 6px 7px; }
    .foot .btn { width: 73px; height: 22px; }
    .foot .ok { border: 2px solid #0078d7; }
  `];
  @query(".combo input") field!: HTMLInputElement;
  firstUpdated() {
    this.field.scrollLeft = this.field.scrollWidth;
  }
  radios(group: string, texts: string[]) {
    return texts.map((t, i) => html`<label><input type="radio" name=${group} ?checked=${i === 0}>${t}</label>`);
  }
  node(icon: TemplateResult, text: string, kids?: unknown, open = false) {
    return html`<li><div class="node"><span class=${classMap({ box: true, plus: !open })}></span><span class="dash"></span>${icon}<span>${text}</span></div>${kids ?? nothing}</li>`;
  }
  render() {
    return html`
      <div class="title">${rar}<span>Extraction path and options</span><button class="q" aria-label="Help">?</button><button aria-label="Close">${close("#111")}</button></div>
      <div class="tabs"><button class="on">General</button><button>Advanced</button></div>
      <div class="panel">
        <div class="top">
          <label for="dest">Destination path (will be created if does not exist)</label><button class="btn">Display</button>
          <div class="combo"><input id="dest" value="6d4ccdd0f663269c3909e74d6847608b8632fb2814b0436a4532b8281e617"><button aria-label="Show paths">${chevron("down")}</button></div><button class="btn">New folder</button>
        </div>
        <div class="main">
          <div class="opts">
            <fieldset><legend>Update mode</legend>${this.radios("update", ["Extract and replace files", "Extract and update files", "Fresh existing files only"])}</fieldset>
            <fieldset><legend>Overwrite mode</legend>${this.radios("overwrite", ["Ask before overwrite", "Overwrite without prompt", "Skip existing files", "Rename automatically"])}</fieldset>
            <fieldset><legend>Miscellaneous</legend>
              <label class="off"><input type="checkbox" disabled>Extract archives to subfolders</label>
              <label><input type="checkbox">Keep broken files</label><label><input type="checkbox">Display files in Explorer</label></fieldset>
            <button class="btn">Save settings</button>
          </div>
          <div class="tree">
            <div class="node">${desktop16}<span>Desktop</span></div>
            <ul class="kids">
              ${this.node(cloud, "OneDrive")}${this.node(person, "admin")}
              ${this.node(pc, "This PC", html`<ul class="kids">${([[cube, "3D Objects"], [desktop16, "Desktop"], [doc16, "Documents"], [down, "Downloads"], [music, "Music"], [photos, "Pictures"], [film, "Videos"], [disk, "Local Disk (C:)"]] as [TemplateResult, string][]).map(([i, t]) => this.node(i, t))}</ul>`, true)}
              ${this.node(library, "Libraries")}${this.node(network, "Network")}
            </ul>
          </div>
        </div>
      </div>
      <div class="foot"><button class="btn ok">OK</button><button class="btn">Cancel</button><button class="btn">Help</button></div>`;
  }
}

@customElement("task-bar")
class TaskBar extends LitElement {
  static styles = [base, css`
    :host { display: flex; height: 40px; background: linear-gradient(90deg, #00212e, #00161f 45%, #000a14 70%, #000a16); color: #fff; font-size: 11px; }
    button { display: grid; place-items: center; width: 49px; height: 40px; }
    .start { width: 48px; }
    .find { display: flex; align-items: center; width: 288px; background: #f2f2f2; border: 1px solid #c9cdd0; border-bottom: 0; padding-left: 14px; gap: 9px; }
    .find input { flex: 1; min-width: 0; border: 0; background: none; outline: 0; padding: 0; font: inherit; font-size: 14px; }
    .find input::placeholder { color: #333; opacity: 1; }
    .find .art .pic { width: 76px; height: 39px; }
    .app .pic { width: 24px; height: 24px; }
    .run { box-shadow: inset 0 -2px #76b9ed; width: 40px; margin: 0 4px 0 6px; }
    .live { background: #3b4a53; width: 48px; margin: 0 0 0 1px; }
    .tray { display: flex; align-items: center; margin-left: auto; }
    .tray .pic { margin-right: 8px; }
    .clock { text-align: center; line-height: 18px; min-width: 57px; }
    .tray button { width: 46px; }
    .tray button .pic { width: 18px; height: 18px; margin: 0; }
    .peek { width: 7px; height: 40px; border-right: 1px solid #44505a; margin-right: 3px; }
  `];
  render() {
    return html`
      <button class="start" aria-label="Start">${windows}</button>
      <label class="find">${lens}<input type="text" placeholder="Type here to search" aria-label="Search"><span class="art">${flowers}</span></label>
      <button aria-label="Task View">${taskView}</button>
      <button class="app" aria-label="Edge">${edgePlain}</button>
      <button class="app run" aria-label="File Explorer">${files}</button>
      <button class="app" aria-label="Firefox">${firefoxPlain}</button>
      <button class="app run live" aria-label="WinRAR">${rar}</button>
      <div class="tray">${chevron("up", "#fff")}${camera}${netTray}${speaker}
        <div class="clock">8:41 PM<br>6/28/2025</div><button aria-label="Notifications">${note}</button><span class="peek"></span></div>`;
  }
}

@customElement("app-root")
class AppRoot extends LitElement {
  static styles = [base, css`
    :host { position: relative; display: flex; flex-direction: column; height: 100vh; overflow: hidden; font-family: "Segoe UI", "Open Sans", sans-serif; font-size: 11px;
      background: radial-gradient(ellipse 76% 125% at 12% 72%, #00b6ff 0, #00b0ff 35%, #0099f8 58%, #0076df 78%, #0050cc 92%, #0044be 100%), #0044be; }
    .desk { position: relative; flex: 1; min-height: 0; }
    explorer-window, archive-window, extract-dialog { position: absolute; }
    explorer-window { left: 283px; top: 14px; width: 786px; box-shadow: 0 2px 8px rgba(0, 0, 0, .25); }
    archive-window { left: 435px; right: -102px; top: 152px; height: 461px; box-shadow: 0 0 6px rgba(0, 0, 0, .25); }
    extract-dialog { left: 642px; top: 150px; width: 531px; box-shadow: 0 3px 12px rgba(0, 0, 0, .35); }
    .mark { position: absolute; right: 47px; bottom: 4px; display: flex; align-items: center; gap: 6px; height: 66px; color: rgba(255, 255, 255, .6); font: 37px "Liberation Sans Narrow", "Roboto Condensed", sans-serif; }
    .mark .pic { width: 56px; height: 64px; }
    .build { position: absolute; right: 5px; bottom: 0; text-align: right; color: #fff; line-height: 17px; text-shadow: 0 0 2px rgba(0, 0, 0, .5); }
  `];
  render() {
    return html`
      <main class="desk">
        <desk-icons></desk-icons>
        <explorer-window></explorer-window>
        <archive-window></archive-window>
        <extract-dialog></extract-dialog>
        <div class="mark"><span>ANY</span>${playMark}<span>RUN</span></div>
        <div class="build">Test Mode<br>Windows 10 Pro<br>Build 19041.vb_release.191206-1406</div>
      </main>
      <task-bar></task-bar>`;
  }
}
